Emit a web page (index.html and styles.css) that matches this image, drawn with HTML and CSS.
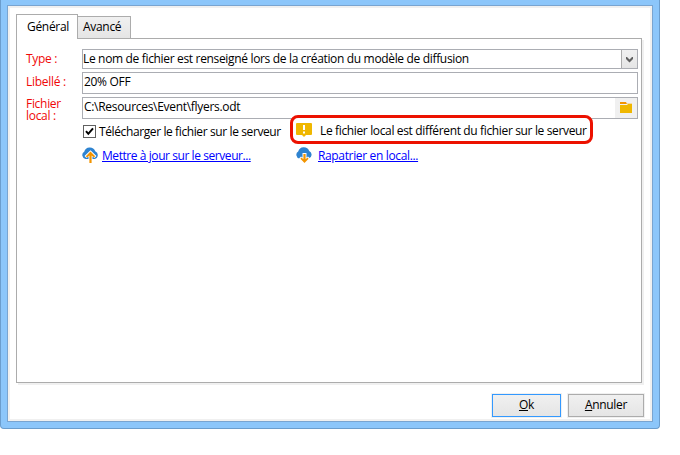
FILE: index.html
```html
<!DOCTYPE html>
<html lang="fr">
<head>
<meta charset="utf-8">
<title>Fichier</title>
<link rel="stylesheet" href="styles.css">
</head>
<body>
<div class="window">
  <div class="client">
    <div class="tabs">
      <div class="tab active"><span class="t-gen">Général</span></div>
      <div class="tab"><span class="t-adv">Avancé</span></div>
    </div>
    <div class="panel">
      <div class="row row-type">
        <label class="label">Type :</label>
        <div class="field"><span class="value t-type">Le nom de fichier est renseigné lors de la création du modèle de diffusion</span>
          <span class="arrow"><svg width="10" height="8" viewBox="0 0 10 8"><path d="M1 1v2l3.500 3.500L8 3V1H7L4.500 3.500 2 1z" fill="#606060"/></svg></span>
        </div>
      </div>
      <div class="row row-label">
        <label class="label">Libellé :</label>
        <div class="field"><span class="value">20% OFF</span></div>
      </div>
      <div class="row row-file">
        <label class="label two">Fichier<br>local :</label>
        <div class="field"><span class="value t-path">C:\Resources\Event\flyers.odt</span>
          <span class="browse"><svg width="12" height="11" viewBox="0 0 12 11"><path d="M0 0h6l1 2H0z" fill="#f29400"/><path d="M7 1h5v1H7z" fill="#f5d9a0"/><path d="M0 3h7l1-1h4v9H0z" fill="#efb700"/></svg></span>
        </div>
      </div>
      <div class="options">
        <div class="check">
          <span class="box"><svg width="11" height="11" viewBox="0 0 11 11"><path d="M2 5.200 4.300 7.800 9 2.300" fill="none" stroke="#000" stroke-width="2"/></svg></span>
          <span class="t-check">Télécharger le fichier sur le serveur</span>
        </div>
        <div class="notice">
          <svg width="16" height="14" viewBox="0 0 16 14"><path d="M1 0h14q1 0 1 1v10q0 1-1 1h-5l-2 2-2-2H1q-1 0-1-1V1q0-1 1-1z" fill="#efb700"/><path d="M7 2h2v5H7zM7 8.500h2v2H7z" fill="#fff"/></svg>
          <span class="t-notice">Le fichier local est différent du fichier sur le serveur</span>
        </div>
      </div>
      <div class="links">
        <div class="link up">
          <svg width="16" height="16" viewBox="0 0 16 16"><path d="M3.500 12A3.900 3.900 0 0 1 2.200 4.800 5.800 5.800 0 0 1 13.200 4.200 4.100 4.100 0 0 1 12.700 12z" fill="#2e83d0"/><path d="M8.500 3.200 14.500 9l-2 2-2-1.500V16h-4V9.500l-2 1.500-2-2z" fill="#fff"/><path d="M8.500 4.500 13.200 9.200l-1.200 1.200-2.400-2V16H7.400V8.400L5 10.400 3.800 9.200z" fill="#f29400"/></svg>
          <a class="t-up">Mettre à jour sur le serveur...</a>
        </div>
        <div class="link">
          <svg width="16" height="16" viewBox="0 0 16 16"><path d="M3.500 11.500A3.800 3.800 0 0 1 2.200 4.500 5.800 5.800 0 0 1 13.200 4 4 4 0 0 1 12.700 11.500z" fill="#2e83d0"/><path d="M6.500 6h4v4.500l1.500-1 2 2L8.500 16 3 11.500l2-2 1.500 1z" fill="#fff"/><path d="M7.400 7h2.200v5.200l1.900-1.600 1.100 1.100L8.500 16l-4.100-4.300 1.100-1.100 1.900 1.600z" fill="#f29400"/></svg>
          <a class="t-down">Rapatrier en local...</a>
        </div>
      </div>
    </div>
    <div class="buttons">
      <div class="button ok"><span><u>O</u>k</span></div>
      <div class="button cancel"><span><u>A</u>nnuler</span></div>
    </div>
  </div>
</div>
</body>
</html>
```
FILE: styles.css
```css
* { box-sizing: border-box; }
body { margin: 0; width: 680px; height: 455px; overflow: hidden; background: #fff; color: #000; font: 12px/16px "Open Sans", "Noto Sans", sans-serif; letter-spacing: -0.3px; }
svg { display: block; flex: none; }
span, a, label { white-space: nowrap; }
.window { width: 660px; height: 429px; background: #8cc6fa; border: solid #6b9dcd; border-width: 0 1px 1px; border-radius: 0 0 4px 4px; padding: 5px 6px 6px; }
.client { height: 417px; border: 1px solid #79a4d0; background: #fff; padding: 8px 8px 0; box-shadow: inset 0 0 0 2px #f0f0f0; }
.tabs { display: flex; align-items: flex-end; height: 24px; }
.tab { height: 22px; width: 53px; border: 1px solid #acacac; border-left: 0; border-bottom: 0; background: linear-gradient(#f0f0f0, #e5e5e5); padding: 2px 0 0 5px; }
.tab.active { height: 25px; width: 62px; margin-bottom: -1px; border-left: 1px solid #acacac; background: #fff; padding: 4px 0 0 10px; position: relative; }
.panel { width: 626px; height: 345px; border: 1px solid #acacac; box-shadow: 2px 2px 0 #f0f0f0; padding: 10px 3px 0 9px; }
.row { display: flex; }
.label { width: 56px; flex: none; color: #f00808; line-height: 12px; padding-top: 4px; }
.label.two { padding-top: 1px; }
.field { width: 556px; border: 1px solid #abadb3; display: flex; justify-content: space-between; }
.row-type { height: 20px; margin-bottom: 3px; }
.row-label, .row-file { height: 22px; margin-bottom: 3px; }
.value { padding: 1px 0 0 1px; }
.t-type { padding: 1px 0 0; letter-spacing: -0.335px; }
.arrow { width: 16px; border-left: 1px solid #acacac; background: linear-gradient(#f0f0f0, #e5e5e5); padding: 6px 0 0 3px; }
.browse { width: 22px; background: #f0f0f0; padding: 4px 0 0 5px; }
.options { display: flex; margin: -7px 0 0 56px; height: 29px; }
.check { display: flex; gap: 3px; width: 208px; padding: 9px 0 0 1px; }
.t-check { letter-spacing: -0.39px; }
.box { width: 13px; height: 13px; border: 1px solid #606060; margin-top: 1px; flex: none; }
.notice { display: flex; gap: 8px; width: 303px; height: 29px; border: 3px solid #ec1100; border-radius: 8px; padding: 5px 0 0 3px; background: #fff; position: relative; letter-spacing: -0.355px; }
.links { display: flex; margin: 3px 0 0 56px; }
.link { display: flex; gap: 6px; }
.up { width: 214px; gap: 4px; }
a { color: #00f; text-decoration: underline; text-underline-offset: 1px; margin-top: 1px; }
.t-up { letter-spacing: -0.43px; }
.t-down { letter-spacing: -0.35px; }
.buttons { display: flex; justify-content: flex-end; gap: 7px; margin: 11px 0 0 0; }
.button { height: 23px; border: 1px solid #acacac; background: linear-gradient(#f0f0f0, #e5e5e5); box-shadow: 0 0 0 1px #f0f0f0; text-align: center; padding-top: 2px; }
.button u { text-underline-offset: 1px; }
.ok { width: 69px; border-color: #3399ff; }
.cancel { width: 76px; }
```
